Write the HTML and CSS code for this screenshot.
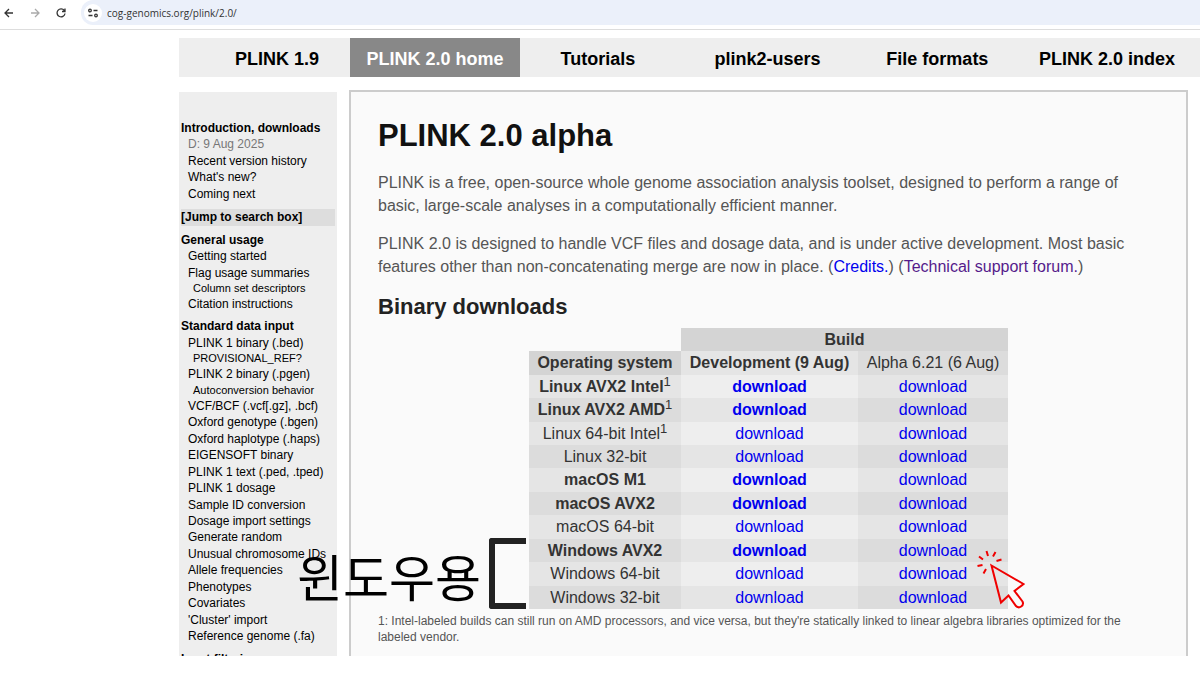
FILE: index.html
```html
<!DOCTYPE html>
<html lang="en">
<head>
<meta charset="utf-8">
<title>PLINK 2.0</title>
<link rel="stylesheet" href="styles.css">
</head>
<body>
<header class="toolbar">
  <button class="tool" type="button" aria-label="Back"><svg width="12" height="12" viewBox="0 0 12 12"><path d="M10 6H2.500M6 2L2 6l4 4"/></svg></button>
  <button class="tool tool-off" type="button" aria-label="Forward"><svg width="12" height="12" viewBox="0 0 12 12"><path d="M2 6h7.500M6 2l4 4-4 4"/></svg></button>
  <button class="tool" type="button" aria-label="Reload"><svg width="12" height="12" viewBox="0 0 12 12"><path d="M9.300 3.500A4 4 0 1 0 10 6.500M10 1.500V4.500H7"/></svg></button>
  <div class="address">
    <button class="site" type="button" aria-label="Site information"><svg width="12" height="12" viewBox="0 0 12 12"><circle cx="3" cy="3.500" r="1.300"/><path d="M6.500 3.500H10.500M1.500 8.500H5.500"/><circle cx="9" cy="8.500" r="1.300"/></svg></button>
    <input class="url" type="text" aria-label="Address" value="cog-genomics.org/plink/2.0/">
  </div>
</header>
<nav class="tabs">
  <a class="tab tab-first" href="#">PLINK 1.9</a>
  <a class="tab tab-active" href="#">PLINK 2.0 home</a>
  <div class="tab-group">
    <a class="tab" href="#">Tutorials</a>
    <a class="tab" href="#">plink2-users</a>
    <a class="tab" href="#">File formats</a>
    <a class="tab" href="#">PLINK 2.0 index</a>
  </div>
</nav>
<div class="columns">
  <aside class="sidebar">
    <section class="group">
      <a class="head" href="#">Introduction, downloads</a>
      <span class="item date">D: 9 Aug 2025</span>
      <a class="item" href="#">Recent version history</a>
      <a class="item" href="#">What's new?</a>
      <a class="item" href="#">Coming next</a>
    </section>
    <section class="group">
      <a class="head jump" href="#">[Jump to search box]</a>
    </section>
    <section class="group">
      <a class="head" href="#">General usage</a>
      <a class="item" href="#">Getting started</a>
      <a class="item" href="#">Flag usage summaries</a>
      <a class="item sub" href="#">Column set descriptors</a>
      <a class="item" href="#">Citation instructions</a>
    </section>
    <section class="group">
      <a class="head" href="#">Standard data input</a>
      <a class="item" href="#">PLINK 1 binary (.bed)</a>
      <a class="item sub" href="#">PROVISIONAL_REF?</a>
      <a class="item" href="#">PLINK 2 binary (.pgen)</a>
      <a class="item sub" href="#">Autoconversion behavior</a>
      <a class="item" href="#">VCF/BCF (.vcf[.gz], .bcf)</a>
      <a class="item" href="#">Oxford genotype (.bgen)</a>
      <a class="item" href="#">Oxford haplotype (.haps)</a>
      <a class="item" href="#">EIGENSOFT binary</a>
      <a class="item" href="#">PLINK 1 text (.ped, .tped)</a>
      <a class="item" href="#">PLINK 1 dosage</a>
      <a class="item" href="#">Sample ID conversion</a>
      <a class="item" href="#">Dosage import settings</a>
      <a class="item" href="#">Generate random</a>
      <a class="item" href="#">Unusual chromosome IDs</a>
      <a class="item" href="#">Allele frequencies</a>
      <a class="item" href="#">Phenotypes</a>
      <a class="item" href="#">Covariates</a>
      <a class="item" href="#">'Cluster' import</a>
      <a class="item" href="#">Reference genome (.fa)</a>
    </section>
    <section class="group">
      <a class="head" href="#">Input filtering</a>
    </section>
  </aside>
  <main class="content">
    <h1>PLINK 2.0 alpha</h1>
    <p>PLINK is a free, open-source whole genome association analysis toolset, designed to perform a range of basic, large-scale analyses in a computationally efficient manner.</p>
    <p>PLINK 2.0 is designed to handle VCF files and dosage data, and is under active development. Most basic features other than non-concatenating merge are now in place. (<a href="#">Credits.</a>) (<a class="visited" href="#">Technical support forum.</a>)</p>
    <h2>Binary downloads</h2>
    <div class="builds">
      <table>
        <colgroup><col class="col-os"><col class="col-dev"><col class="col-alpha"></colgroup>
        <thead>
          <tr><td class="blank"></td><th class="dark" colspan="2">Build</th></tr>
          <tr><th class="dark">Operating system</th><th class="mid">Development (9 Aug)</th><th class="deep plain">Alpha 6.21 (6 Aug)</th></tr>
        </thead>
        <tbody>
          <tr class="strong"><td>Linux AVX2 Intel<sup>1</sup></td><td><a href="#">download</a></td><td><a href="#">download</a></td></tr>
          <tr class="strong"><td>Linux AVX2 AMD<sup>1</sup></td><td><a href="#">download</a></td><td><a href="#">download</a></td></tr>
          <tr><td>Linux 64-bit Intel<sup>1</sup></td><td><a href="#">download</a></td><td><a href="#">download</a></td></tr>
          <tr><td>Linux 32-bit</td><td><a href="#">download</a></td><td><a href="#">download</a></td></tr>
          <tr class="strong"><td>macOS M1</td><td><a href="#">download</a></td><td><a href="#">download</a></td></tr>
          <tr class="strong"><td>macOS AVX2</td><td><a href="#">download</a></td><td><a href="#">download</a></td></tr>
          <tr><td>macOS 64-bit</td><td><a href="#">download</a></td><td><a href="#">download</a></td></tr>
          <tr class="strong"><td>Windows AVX2</td><td><a href="#">download</a></td><td><a href="#">download</a></td></tr>
          <tr><td>Windows 64-bit</td><td><a href="#">download</a></td><td><a href="#">download</a></td></tr>
          <tr><td>Windows 32-bit</td><td><a href="#">download</a></td><td><a href="#">download</a></td></tr>
        </tbody>
      </table>
      <div class="callout"><span class="callout-text" lang="ko">윈도우용</span><span class="bracket"></span></div>
      <svg class="pointer" width="50" height="60" viewBox="0 0 50 60"><path d="M14.500 16.500L46.500 35 37.500 42 45.500 52.500A4 4 0 0 1 39 57L31.500 46.500 24 53.500Z"/><path d="M9.500 2L11 7M18.500 3L16 7.500M19.500 12L24.500 10.500M2 7.500L6 10.500M.500 17L5.500 16M9 20L6.500 24.500"/></svg>
    </div>
    <p class="note">1: Intel-labeled builds can still run on AMD processors, and vice versa, but they're statically linked to linear algebra libraries optimized for the labeled vendor.</p>
  </main>
</div>
</body>
</html>
```
FILE: styles.css
```css
* { box-sizing: border-box; }
body {
  margin: 0;
  height: 100vh;
  display: flex;
  flex-direction: column;
  padding-bottom: 25px;
  overflow: hidden;
  background: #fff;
  font-family: "Liberation Sans", Arial, sans-serif;
}
a { color: #00e; text-decoration: none; }
button { border: 0; padding: 0; background: none; display: grid; place-items: center; }
svg { fill: none; stroke: #333; stroke-width: 1.3; }

.toolbar {
  display: flex;
  align-items: flex-start;
  height: 30px;
  flex: none;
  padding-left: 3px;
  gap: 14px;
  border-bottom: 1px solid #ddd;
}
.tool { width: 12px; height: 25px; }
.tool-off svg { stroke: #aaa; }
.address {
  flex: 1;
  display: flex;
  align-items: center;
  height: 25px;
  gap: 5px;
  padding-left: 3px;
  background: #ebf0fa;
  border-radius: 12px 0 0 12px;
}
.site { width: 18px; height: 18px; border-radius: 50%; background: #fff; }
.url {
  flex: 1;
  border: 0;
  padding: 0;
  background: none;
  color: #333;
  font: 10px "Open Sans", sans-serif;
}

.tabs {
  display: flex;
  flex: none;
  margin: 8px 0 0 179px;
  height: 39px;
  background: #eee;
}
.tab {
  display: grid;
  place-items: center;
  padding-top: 3px;
  color: #000;
  font-size: 18px;
  font-weight: bold;
  white-space: nowrap;
}
.tab-first { width: 171px; padding-left: 25px; }
.tab-active { width: 170px; background: #888; color: #fff; }
.tab-group {
  flex: 1;
  display: grid;
  grid-template-columns: repeat(4, 1fr);
  margin: 0 8px 0 -7px;
}

.columns {
  flex: 1;
  min-height: 0;
  display: flex;
  gap: 12px;
  margin: 13px 12px 0 179px;
  overflow: hidden;
}
.sidebar {
  width: 158px;
  flex: none;
  margin-top: 2px;
  padding: 28px 2px 0;
  background: #eee;
  font-size: 12px;
  line-height: 1.37;
  white-space: nowrap;
}
.group { margin-bottom: 6px; }
.group:first-child, .group:nth-child(4) { margin-bottom: 7px; }
.head, .item { display: block; color: #000; }
.head { font-weight: bold; }
.item { padding-left: 7px; }
.jump { background: #ddd; }
.date { color: #777; }
.sub { padding-left: 12px; font-size: 11px; }

.content {
  flex: 1;
  padding: 0 27px;
  border: 2px solid #ccc;
  border-bottom: 0;
  background: #fafafa;
  color: #555;
  height: max-content;
  min-height: 100%;
}
h1 { margin: 26px 0 17px; font-size: 31px; line-height: 36px; color: #111; }
h2 { margin: 15px 0 8px; font-size: 22px; line-height: 26px; color: #222; }
p { margin: 0 0 14px; font-size: 16px; line-height: 1.465; }
.visited { color: #551a8b; }

.builds { position: relative; width: max-content; margin: 0 auto; }
table {
  border-collapse: collapse;
  font-size: 16px;
  line-height: 1.465;
  text-align: center;
  color: #333;
}
th, td { padding: 0; }
.col-os { width: 152px; }
.col-dev { width: 177px; }
.col-alpha { width: 150px; }
.dark { background: #d4d4d4; }
.mid { background: #e5e5e5; }
.deep { background: #dcdcdc; }
.plain { font-weight: normal; }
tbody td { background: #e5e5e5; }
tbody td:nth-child(2) { background: #eee; }
tbody tr:nth-child(even) td { background: #dcdcdc; }
tbody tr:nth-child(even) td:nth-child(2) { background: #e5e5e5; }
.strong td:first-child, .strong td:nth-child(2) { font-weight: bold; }
sup { font-size: 13px; font-weight: normal; line-height: 0; }

.callout {
  position: absolute;
  right: 100%;
  bottom: 0;
  display: flex;
  align-items: flex-end;
  gap: 8px;
  padding-right: 3px;
  white-space: nowrap;
}
.callout-text {
  color: #000;
  font: 50px/68px "Noto Sans CJK KR", sans-serif;
}
.bracket {
  width: 37px;
  height: 71px;
  border: 6px solid #222;
  border-right: 0;
  border-radius: 3px 0 0 3px;
}
.pointer {
  position: absolute;
  left: 448px;
  bottom: 0;
  stroke: #f00000;
  stroke-width: 2;
}
.note { margin: 4px 0 0; font-size: 12px; line-height: 16px; }
```
